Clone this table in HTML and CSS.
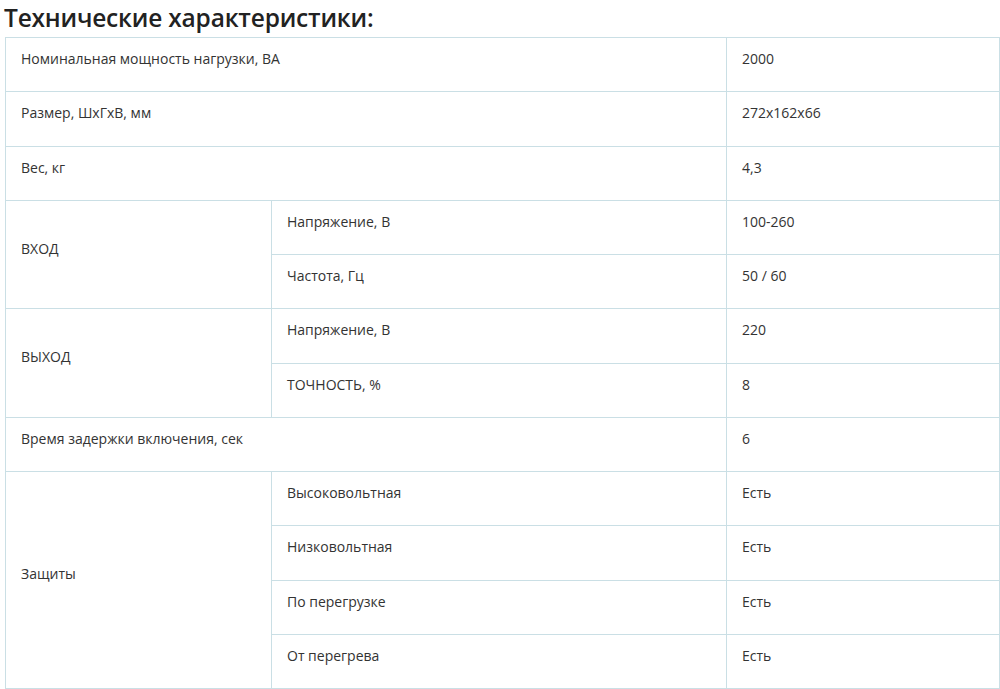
FILE: index.html
```html
<!DOCTYPE html>
<html lang="ru">
<head>
<meta charset="utf-8">
<link rel="stylesheet" href="styles.css">
</head>
<body>
<h2 class="title">Технические характеристики:</h2>
<table class="specs">
  <colgroup><col class="c1"><col class="c2"><col class="c3"></colgroup>
  <tr><td colspan="2">Номинальная мощность нагрузки, ВА</td><td>2000</td></tr>
  <tr><td colspan="2">Размер, ШхГхВ, мм</td><td>272x162x66</td></tr>
  <tr><td colspan="2">Вес, кг</td><td>4,3</td></tr>
  <tr><td rowspan="2" class="mid">ВХОД</td><td>Напряжение, В</td><td>100-260</td></tr>
  <tr><td>Частота, Гц</td><td>50 / 60</td></tr>
  <tr><td rowspan="2" class="mid">ВЫХОД</td><td>Напряжение, В</td><td>220</td></tr>
  <tr><td>ТОЧНОСТЬ, %</td><td>8</td></tr>
  <tr><td colspan="2">Время задержки включения, сек</td><td>6</td></tr>
  <tr><td rowspan="4" class="mid">Защиты</td><td>Высоковольтная</td><td>Есть</td></tr>
  <tr><td>Низковольтная</td><td>Есть</td></tr>
  <tr><td>По перегрузке</td><td>Есть</td></tr>
  <tr><td>От перегрева</td><td>Есть</td></tr>
</table>
</body>
</html>
```
FILE: styles.css
```css
html, body { margin: 0; padding: 0; background: #fff; }
body { font-family: "Open Sans", "Noto Sans", sans-serif; color: #333; }
.title {
  margin: 0;
  padding: 2px 0 0 4px;
  font-size: 24.5px;
  line-height: 32px;
  font-weight: 600;
  color: #222;
  letter-spacing: -0.2px;
}
.specs {
  margin: 3px 0 0 5px;
  width: 994px;
  border-collapse: collapse;
  table-layout: fixed;
}
.c1 { width: 266px; }
.c2 { width: 455px; }
.c3 { width: 273px; }
.specs td {
  border: 1px solid #cadfe5;
  height: 21.25px;
  padding: 10px 15px 22px;
  font-size: 14px;
  line-height: 21.25px;
  vertical-align: top;
  color: #333;
}
.specs td.mid { vertical-align: middle; }
```
